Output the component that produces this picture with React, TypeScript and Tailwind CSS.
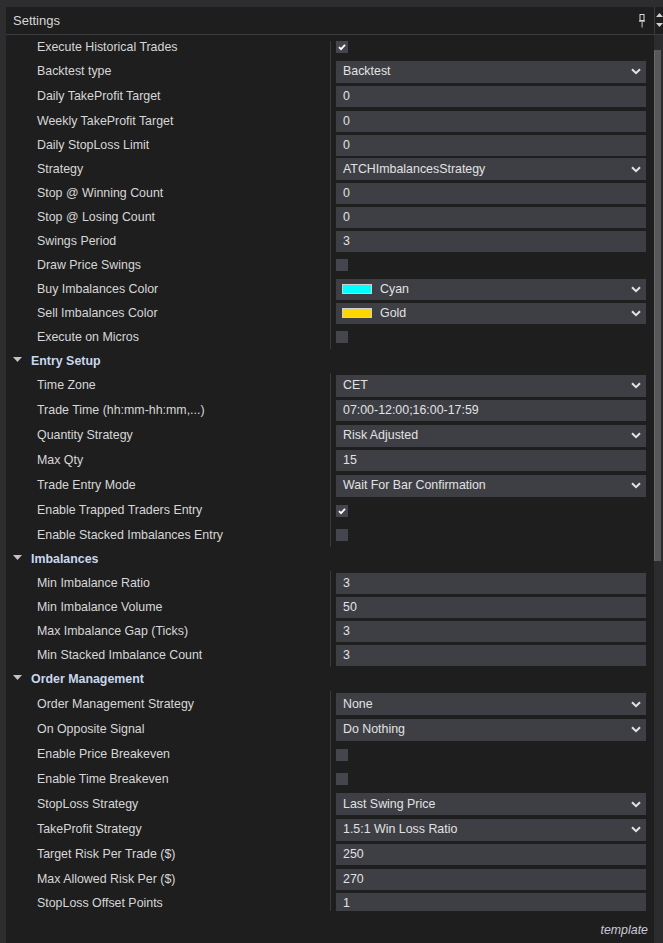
import type { ReactNode } from 'react';

type Row =
  | { kind: 'check'; label: string; checked: boolean; h: string }
  | { kind: 'input'; label: string; value: string; h: string }
  | { kind: 'select'; label: string; value: string; h: string }
  | { kind: 'color'; label: string; value: string; swatch: string; h: string };

type Section = { title?: string; lineTop: string; rows: Row[] };

const SECTIONS: Section[] = [
  {
    lineTop: 'top-[6px]',
    rows: [
      { kind: 'check', label: 'Execute Historical Trades', checked: true, h: 'h-[24px]' },
      { kind: 'select', label: 'Backtest type', value: 'Backtest', h: 'h-[25px]' },
      { kind: 'input', label: 'Daily TakeProfit Target', value: '0', h: 'h-[25px]' },
      { kind: 'input', label: 'Weekly TakeProfit Target', value: '0', h: 'h-[24px]' },
      { kind: 'input', label: 'Daily StopLoss Limit', value: '0', h: 'h-[24px]' },
      { kind: 'select', label: 'Strategy', value: 'ATCHImbalancesStrategy', h: 'h-[24px]' },
      { kind: 'input', label: 'Stop @ Winning Count', value: '0', h: 'h-[24px]' },
      { kind: 'input', label: 'Stop @ Losing Count', value: '0', h: 'h-[24px]' },
      { kind: 'input', label: 'Swings Period', value: '3', h: 'h-[24px]' },
      { kind: 'check', label: 'Draw Price Swings', checked: false, h: 'h-[24px]' },
      { kind: 'color', label: 'Buy Imbalances Color', value: 'Cyan', swatch: 'bg-[#00ffff]', h: 'h-[24px]' },
      { kind: 'color', label: 'Sell Imbalances Color', value: 'Gold', swatch: 'bg-[#ffd700]', h: 'h-[24px]' },
      { kind: 'check', label: 'Execute on Micros', checked: false, h: 'h-[24px]' },
    ],
  },
  {
    title: 'Entry Setup',
    lineTop: 'top-0',
    rows: [
      { kind: 'select', label: 'Time Zone', value: 'CET', h: 'h-[25px]' },
      { kind: 'input', label: 'Trade Time (hh:mm-hh:mm,...)', value: '07:00-12:00;16:00-17:59', h: 'h-[25px]' },
      { kind: 'select', label: 'Quantity Strategy', value: 'Risk Adjusted', h: 'h-[25px]' },
      { kind: 'input', label: 'Max Qty', value: '15', h: 'h-[25px]' },
      { kind: 'select', label: 'Trade Entry Mode', value: 'Wait For Bar Confirmation', h: 'h-[25px]' },
      { kind: 'check', label: 'Enable Trapped Traders Entry', checked: true, h: 'h-[25px]' },
      { kind: 'check', label: 'Enable Stacked Imbalances Entry', checked: false, h: 'h-[24px]' },
    ],
  },
  {
    title: 'Imbalances',
    lineTop: 'top-0',
    rows: [
      { kind: 'input', label: 'Min Imbalance Ratio', value: '3', h: 'h-[24px]' },
      { kind: 'input', label: 'Min Imbalance Volume', value: '50', h: 'h-[24px]' },
      { kind: 'input', label: 'Max Imbalance Gap (Ticks)', value: '3', h: 'h-[24px]' },
      { kind: 'input', label: 'Min Stacked Imbalance Count', value: '3', h: 'h-[24px]' },
    ],
  },
  {
    title: 'Order Management',
    lineTop: 'top-0',
    rows: [
      { kind: 'select', label: 'Order Management Strategy', value: 'None', h: 'h-[26px]' },
      { kind: 'select', label: 'On Opposite Signal', value: 'Do Nothing', h: 'h-[25px]' },
      { kind: 'check', label: 'Enable Price Breakeven', checked: false, h: 'h-[25px]' },
      { kind: 'check', label: 'Enable Time Breakeven', checked: false, h: 'h-[24px]' },
      { kind: 'select', label: 'StopLoss Strategy', value: 'Last Swing Price', h: 'h-[26px]' },
      { kind: 'select', label: 'TakeProfit Strategy', value: '1.5:1 Win Loss Ratio', h: 'h-[25px]' },
      { kind: 'input', label: 'Target Risk Per Trade ($)', value: '250', h: 'h-[25px]' },
      { kind: 'input', label: 'Max Allowed Risk Per ($)', value: '270', h: 'h-[24px]' },
      { kind: 'input', label: 'StopLoss Offset Points', value: '1', h: 'h-[24px]' },
    ],
  },
];

function Chevron() {
  return (
    <svg width="10" height="7" viewBox="0 0 10 7" className="shrink-0">
      <polyline points="1,1.2 5,5.2 9,1.2" fill="none" stroke="#e2e2e2" strokeWidth="2" />
    </svg>
  );
}

function Checkbox({ checked }: { checked: boolean }) {
  return (
    <div className="w-[12px] h-[12px] bg-[#45454d] grid place-items-center">
      {checked && (
        <svg width="10" height="10" viewBox="0 0 10 10">
          <polyline points="2,5.2 4,7.2 8,2.8" fill="none" stroke="#ffffff" strokeWidth="1.8" />
        </svg>
      )}
    </div>
  );
}

function Value({ row }: { row: Row }): ReactNode {
  if (row.kind === 'check') return <Checkbox checked={row.checked} />;
  if (row.kind === 'input')
    return (
      <div className="h-[21px] bg-[#3e3e45] flex items-center pl-[7px] text-[#e2e2e2]">{row.value}</div>
    );
  if (row.kind === 'select')
    return (
      <div className="h-[22px] bg-[#3e3e45] flex items-center justify-between pl-[7px] pr-[5px] text-[#e2e2e2]">
        <span>{row.value}</span>
        <Chevron />
      </div>
    );
  return (
    <div className="h-[21px] bg-[#3e3e45] flex items-center pl-[6px] pr-[5px] text-[#e2e2e2]">
      <span className={`w-[30px] h-[10px] border border-[#d0d0d0] ${row.swatch}`} />
      <span className="ml-[8px] flex-1">{row.value}</span>
      <Chevron />
    </div>
  );
}

function SectionBlock({ section }: { section: Section }) {
  return (
    <div>
      {section.title && (
        <div className="h-[24px] flex items-center pl-[7px]">
          <svg width="9" height="6" viewBox="0 0 9 6" className="mb-[2px]">
            <polygon points="0,0 9,0 4.5,5" fill="#c4c4c4" />
          </svg>
          <span className="ml-[9px] font-bold text-[#c9d7ee]">{section.title}</span>
        </div>
      )}
      <div className="relative">
        {/* column divider between labels and editors */}
        <div className={`absolute left-[324px] ${section.lineTop} bottom-0 w-px bg-[#3a3a3e]`} />
        {section.rows.map((r) => (
          <div key={r.label} className={`flex items-center ${r.h}`}>
            <div className="w-[324px] shrink-0 pl-[31px] text-[#d7d7d7] whitespace-nowrap">{r.label}</div>
            <div className="flex-1 pl-[6px] pr-[8px]">
              <Value row={r} />
            </div>
          </div>
        ))}
      </div>
    </div>
  );
}

export default function App() {
  return (
    <div className="w-[663px] h-[943px] bg-[#2d2d2f] pl-[6px] pt-[7px] flex text-[12.4px] font-['Liberation_Sans',Arial,sans-serif] overflow-hidden">
      <div className="flex-1 flex flex-col bg-[#1e1e1f]">
        {/* title bar */}
        <div className="h-[28px] shrink-0 flex border-b border-[#3b3b3d]">
          <div className="w-[648px] flex items-center justify-between pl-[7px] pr-[9px]">
            <span className="text-[13px] text-[#d6d6d6]">Settings</span>
            <svg width="6" height="14" viewBox="0 0 6 14">
              <rect x="1" y="0.5" width="4" height="6" fill="none" stroke="#d8d8d8" strokeWidth="1" />
              <rect x="0" y="6.5" width="6" height="1.2" fill="#d8d8d8" />
              <rect x="2.5" y="7.5" width="1.2" height="6" fill="#a8a8a8" />
            </svg>
          </div>
          <div className="flex-1 border-l border-[#3b3b3d] flex flex-col items-end justify-center gap-[5px]">
            <svg width="7" height="5" viewBox="0 0 7 5">
              <polygon points="3.5,0 7,4 0,4" fill="#d0d0d0" />
            </svg>
            <svg width="7" height="5" viewBox="0 0 7 5">
              <polygon points="0,0 7,0 3.5,4" fill="#d0d0d0" />
            </svg>
          </div>
        </div>

        <div className="flex-1 flex min-h-0">
          <div className="w-[648px] flex flex-col">
            <div className="h-[876px] overflow-hidden">
              {SECTIONS.map((s, i) => (
                <SectionBlock key={i} section={s} />
              ))}
            </div>
            <div className="flex-1 flex justify-end pr-[6px] pt-[10px]">
              <span className="italic text-[#c9cbd8]">template</span>
            </div>
          </div>
          {/* scrollbar */}
          <div className="flex-1 bg-[#2c2c2e] pt-[15px]">
            <div className="h-[511px] w-[7px] bg-[#58585b] border-l border-[#6a6a6d]" />
          </div>
        </div>
      </div>
    </div>
  );
}
